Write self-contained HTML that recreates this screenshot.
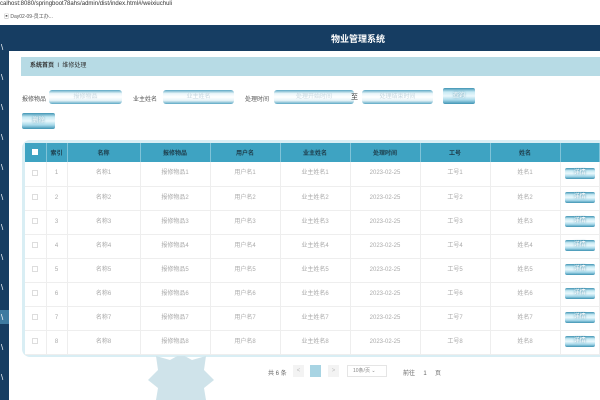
<!DOCTYPE html><html><head><meta charset="utf-8"><style>
*{margin:0;padding:0;box-sizing:border-box}
body{width:600px;height:400px;overflow:hidden;background:#fff;font-family:"Liberation Sans","Noto Sans CJK SC",sans-serif;position:relative;font-size:7px;color:#999}
.abs{position:absolute}
.inp{position:absolute;height:14px;border-radius:3px;background:linear-gradient(#5aa7c4,#eaf6fa 25%,#fff 50%,#e6f3f7 75%,#5aa7c4);color:#c8d8e0;text-align:center;line-height:14px;font-size:6px}
.btn{position:absolute;border-radius:2px;background:linear-gradient(#3e93b3,#c8eaf4 25%,#eaf8fc 50%,#a8d9ea 75%,#3e93b3);color:#fff;text-align:center;font-size:6px;text-shadow:0 0 2px #2a7898}
.sb{position:static;display:inline-block;width:30px;height:11px;line-height:11px;vertical-align:middle}
table{border-collapse:collapse;position:absolute;left:25px;top:143px;width:575px;table-layout:fixed}
th{background:#3ea3c2;color:#1d3c4a;height:19px;font-size:6px;font-weight:bold;border-right:1px solid #7fc3d8}
td{height:24px;text-align:center;font-size:6px;color:#aaa;border-right:1px solid #eee;border-bottom:1px solid #eee;background:#fff;vertical-align:middle;line-height:11px}
.cb{display:inline-block;width:6px;height:6px;border:1px solid #ddd;vertical-align:middle}
</style></head><body>
<div class="abs" style="left:0;top:0;width:600px;height:10px;font-size:6px;color:#333;line-height:9px">calhost:8080/springboot78ahs/admin/dist/index.html#/weixiuchuli</div>
<div class="abs" style="left:4px;top:13px;font-size:5px;color:#555">▣ Day02-09-员工办...</div>
<div class="abs" style="left:0;top:25px;width:600px;height:26px;background:#163d62"></div>
<div class="abs" style="left:0;top:25px;width:9px;height:375px;background:#163d62"></div>
<div class="abs" style="left:0;top:310px;width:9px;height:14px;background:#3d7aa0"></div>
<div class="abs" style="left:1px;top:33px;color:#fff;font-size:8px;line-height:30px">\<br>\<br>\<br>\<br>\<br>\<br>\<br>\<br>\<br>\<br>\<br>\<br></div>
<div class="abs" style="top:32px;color:#fff;font-size:9px;font-weight:bold;width:120px;text-align:center;left:298px">物业管理系统</div>
<div class="abs" style="left:9px;top:51px;width:591px;height:349px;background:#fff"></div>
<div class="abs" style="left:21px;top:57px;width:579px;height:19px;background:#b7dbe5;font-size:6px;line-height:19px;padding-left:9px;color:#333"><b>系统首页</b> &nbsp;I&nbsp; 维修处理</div>
<div class="abs" style="left:22px;top:94px;color:#555;font-size:6px">报修物品</div>
<div class="inp" style="left:49px;top:90px;width:73px">报修物品</div>
<div class="abs" style="left:133px;top:94px;color:#555;font-size:6px">业主姓名</div>
<div class="inp" style="left:163px;top:90px;width:71px">业主姓名</div>
<div class="abs" style="left:245px;top:94px;color:#555;font-size:6px">处理时间</div>
<div class="inp" style="left:274px;top:90px;width:80px">处理开始时间</div>
<div class="abs" style="left:351px;top:92px;color:#333;font-size:7px">至</div>
<div class="inp" style="left:362px;top:90px;width:71px">处理结束时间</div>
<div class="btn" style="left:443px;top:88px;width:32px;height:16px;line-height:16px">查询</div>
<div class="btn" style="left:22px;top:113px;width:33px;height:16px;line-height:16px">删除</div>
<div class="abs" style="left:22px;top:140px;width:578px;height:217px;background:#d9eef4;border-radius:8px 0 0 8px"></div>
<table>
<colgroup><col style="width:21px"><col style="width:21px"><col style="width:73px"><col style="width:70px"><col style="width:70px"><col style="width:70px"><col style="width:70px"><col style="width:70px"><col style="width:70px"><col></colgroup>
<tr><th><span style="display:inline-block;width:6px;height:6px;background:#fff"></span></th><th>索引</th><th>名称</th><th>报修物品</th><th>用户名</th><th>业主姓名</th><th>处理时间</th><th>工号</th><th>姓名</th><th></th></tr>
<tr><td><span class="cb"></span></td><td>1</td><td>名称1</td><td>报修物品1</td><td>用户名1</td><td>业主姓名1</td><td>2023-02-25</td><td>工号1</td><td>姓名1</td><td><span class="btn sb">详情</span></td></tr>
<tr><td><span class="cb"></span></td><td>2</td><td>名称2</td><td>报修物品2</td><td>用户名2</td><td>业主姓名2</td><td>2023-02-25</td><td>工号2</td><td>姓名2</td><td><span class="btn sb">详情</span></td></tr>
<tr><td><span class="cb"></span></td><td>3</td><td>名称3</td><td>报修物品3</td><td>用户名3</td><td>业主姓名3</td><td>2023-02-25</td><td>工号3</td><td>姓名3</td><td><span class="btn sb">详情</span></td></tr>
<tr><td><span class="cb"></span></td><td>4</td><td>名称4</td><td>报修物品4</td><td>用户名4</td><td>业主姓名4</td><td>2023-02-25</td><td>工号4</td><td>姓名4</td><td><span class="btn sb">详情</span></td></tr>
<tr><td><span class="cb"></span></td><td>5</td><td>名称5</td><td>报修物品5</td><td>用户名5</td><td>业主姓名5</td><td>2023-02-25</td><td>工号5</td><td>姓名5</td><td><span class="btn sb">详情</span></td></tr>
<tr><td><span class="cb"></span></td><td>6</td><td>名称6</td><td>报修物品6</td><td>用户名6</td><td>业主姓名6</td><td>2023-02-25</td><td>工号6</td><td>姓名6</td><td><span class="btn sb">详情</span></td></tr>
<tr><td><span class="cb"></span></td><td>7</td><td>名称7</td><td>报修物品7</td><td>用户名7</td><td>业主姓名7</td><td>2023-02-25</td><td>工号7</td><td>姓名7</td><td><span class="btn sb">详情</span></td></tr>
<tr><td><span class="cb"></span></td><td>8</td><td>名称8</td><td>报修物品8</td><td>用户名8</td><td>业主姓名8</td><td>2023-02-25</td><td>工号8</td><td>姓名8</td><td><span class="btn sb">详情</span></td></tr>
</table>
<svg class="abs" style="left:148px;top:356px" width="66" height="44" viewBox="0 0 66 44"><polygon points="8,0 22,4 33,-2 44,4 58,0 56,14 66,24 56,32 58,44 8,44 10,32 0,24 10,14" fill="#cfe3ea"/></svg>
<div class="abs" style="left:268px;top:368px;font-size:6px;color:#666">共 6 条</div>
<div class="abs" style="left:293px;top:365px;width:11px;height:12px;background:#f3f3f3;color:#bbb;text-align:center;line-height:12px;font-size:6px">&lt;</div>
<div class="abs" style="left:310px;top:365px;width:11px;height:12px;background:#a8d4e3"></div>
<div class="abs" style="left:328px;top:365px;width:11px;height:12px;background:#f3f3f3;color:#bbb;text-align:center;line-height:12px;font-size:6px">&gt;</div>
<div class="abs" style="left:347px;top:365px;width:40px;height:12px;border:1px solid #e5e5e5;color:#888;line-height:10px;font-size:5px;padding-left:5px">10条/页 ⌄</div>
<div class="abs" style="left:403px;top:368px;font-size:6px;color:#666">前往 &nbsp;&nbsp;&nbsp;&nbsp;1&nbsp;&nbsp;&nbsp;&nbsp; 页</div>
</body></html>
